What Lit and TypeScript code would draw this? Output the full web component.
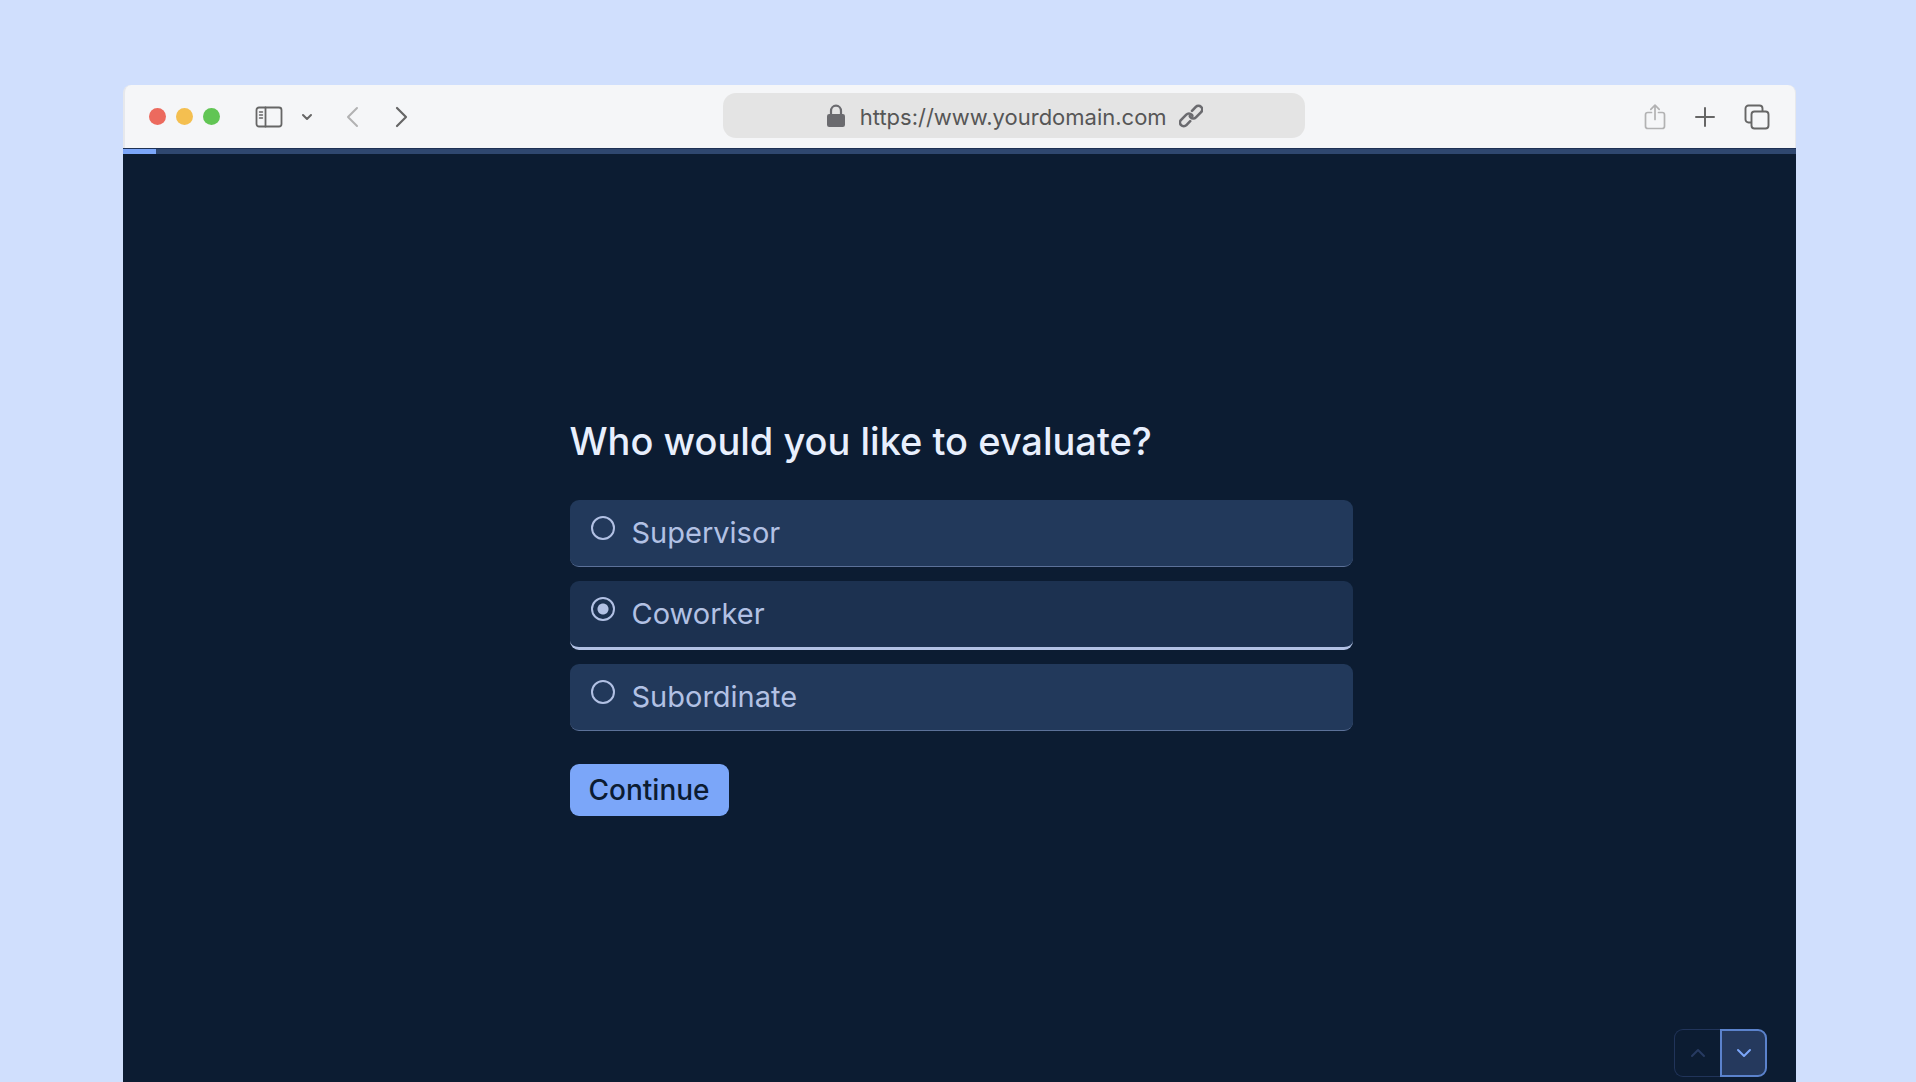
import { LitElement, html, css, svg } from "lit";
import { customElement, state, property } from "lit/decorators.js";

@customElement("browser-bar")
class BrowserBar extends LitElement {
  static styles = css`
    :host {
      display: block;
      font-family: Inter, "Liberation Sans", sans-serif;
    }
    .bar {
      display: grid;
      grid-template-columns: 21fr minmax(0, 582px) 17fr;
      align-items: center;
      height: 63px;
      padding: 0 25px 0 24px;
      box-sizing: border-box;
      background: #f5f6f8;
      border-left: 2px solid #e6e8ec;
      border-right: 1px solid #e6e8ec;
      border-radius: 8px 8px 0 0;
    }
    .left,
    .right,
    .lights {
      display: flex;
      align-items: center;
    }
    .lights {
      gap: 10px;
      margin-right: 35px;
    }
    .light {
      width: 17px;
      height: 17px;
      border-radius: 50%;
    }
    .close {
      background: #ec6a5e;
    }
    .minimise {
      background: #f4bf50;
    }
    .zoom {
      background: #61c554;
    }
    .right {
      justify-content: flex-end;
      gap: 24px;
    }
    button {
      display: block;
      padding: 0;
      border: 0;
      background: none;
      color: #666;
      cursor: pointer;
    }
    .pale {
      color: #b2b2b3;
    }
    .menu {
      margin: 0 29px 0 16px;
    }
    .forward {
      margin-left: 33px;
    }
    svg {
      display: block;
      fill: none;
      stroke: currentColor;
      stroke-linecap: round;
      stroke-linejoin: round;
    }
    .address {
      display: flex;
      align-items: center;
      justify-content: center;
      gap: 12px;
      height: 45px;
      margin-bottom: 2px;
      border-radius: 13px;
      background: #e4e4e4;
      color: #6b6b6f;
    }
    .url {
      color: #565656;
      font-size: 22px;
      line-height: 28px;
      text-decoration: none;
      padding: 3px 0 0 2px;
    }
  `;

  render() {
    return html`
      <header class="bar">
        <div class="left">
          <div class="lights">
            <span class="light close"></span>
            <span class="light minimise"></span>
            <span class="light zoom"></span>
          </div>
          <button aria-label="Sidebar">
            <svg width="28" height="22" viewBox="0 0 28 22" stroke-width="1.8">
              <rect x="1.5" y="1.5" width="25" height="19" rx="2.5" />
              <path d="M10.5 1.5v19" />
              <path d="M4.5 6h3M4.5 9h3M4.5 12h3" stroke-width="1.4" />
            </svg>
          </button>
          <button class="menu" aria-label="Tab groups">
            <svg width="16" height="10" viewBox="0 0 16 10" stroke-width="2">
              <path d="m4 3 4 4 4-4" />
            </svg>
          </button>
          <button class="pale" aria-label="Back">
            <svg width="16" height="22" viewBox="0 0 16 22" stroke-width="2">
              <path d="M13 2 4 11l9 9" />
            </svg>
          </button>
          <button class="forward" aria-label="Forward">
            <svg width="16" height="22" viewBox="0 0 16 22" stroke-width="2.2">
              <path d="m4 2 9 9-9 9" />
            </svg>
          </button>
        </div>
        <div class="address">
          <svg width="20" height="24" viewBox="0 0 20 24">
            <rect x="1" y="10" width="18" height="13" rx="2.2" fill="currentColor" stroke="none" />
            <path d="M5 12V7a5 5.400 0 0 1 10 0V12" stroke-width="2.2" />
          </svg>
          <a class="url" href="https://www.yourdomain.com">https://www.yourdomain.com</a>
          <svg width="24" height="26" viewBox="0 0 24 26" stroke-width="2.600">
            <path d="M13 7.800l3.800-3.900a3.700 3.700 0 0 1 5.300 5.300l-5.200 5.200a3.700 3.700 0 0 1-5.300 0 3.600 3.600 0 0 1-.8-1.300" />
            <path d="M11.200 18.200l-3.800 3.900a3.700 3.700 0 0 1-5.300-5.300l5.200-5.200a3.700 3.700 0 0 1 5.300 0q.6.6.8 1.300" />
          </svg>
        </div>
        <div class="right">
          <button class="pale" aria-label="Share">
            <svg width="22" height="26" viewBox="0 0 22 26" stroke-width="1.700">
              <path d="M7.500 8.500H3.800A2.300 2.300 0 0 0 1.500 10.800v11.400a2.300 2.300 0 0 0 2.300 2.300h14.400a2.300 2.300 0 0 0 2.300-2.300V10.800a2.300 2.300 0 0 0-2.300-2.300h-3.700" />
              <path d="M11 15.500V1.500M6.800 5.300 11 1.200l4.200 4.100" />
            </svg>
          </button>
          <button aria-label="New tab">
            <svg width="30" height="22" viewBox="0 0 30 22" stroke-width="2">
              <path d="M15 2v18M6 11h18" />
            </svg>
          </button>
          <button aria-label="Tab overview">
            <svg width="26" height="26" viewBox="0 0 26 26" stroke-width="1.900">
              <path d="M7 18.500H4.500a3 3 0 0 1-3-3v-11a3 3 0 0 1 3-3h11a3 3 0 0 1 3 3V7" />
              <rect x="7.500" y="7.500" width="17" height="17" rx="3" />
            </svg>
          </button>
        </div>
      </header>
    `;
  }
}

@customElement("survey-progress")
class SurveyProgress extends LitElement {
  @property({ type: Number }) value = 0;

  static styles = css`
    :host {
      display: block;
      background: #2f476f;
      border-top: 1px solid #1e3154;
    }
    .fill {
      height: 5px;
      background: #7ba6f9;
    }
  `;

  render() {
    return html`<div class="fill" role="progressbar" aria-label="Progress"
      aria-valuenow=${this.value} style="width:${this.value}%"></div>`;
  }
}

@customElement("app-root")
class AppRoot extends LitElement {
  @state() private choice = "Coworker";
  private choices = ["Supervisor", "Coworker", "Subordinate"];

  static styles = css`
    :host {
      display: flex;
      flex-direction: column;
      box-sizing: border-box;
      min-height: 100vh;
      padding: 85px 120px 0 123px;
      background: #d0dffd;
      font-family: Inter, "Liberation Sans", sans-serif;
    }
    .page {
      flex: 1;
      display: grid;
      padding: 5px 29px;
      background: #0c1c32;
    }
    form,
    nav {
      grid-area: 1 / 1;
    }
    form {
      place-self: center;
      width: 100%;
      max-width: 783px;
      padding-left: 3px;
    }
    h1 {
      margin: 0 0 38px;
      color: #e8effd;
      font-size: 38px;
      font-weight: 500;
      line-height: 42px;
    }
    fieldset {
      display: flex;
      flex-direction: column;
      gap: 14px;
      margin: 0 0 33px;
      padding: 0;
      border: 0;
      min-width: 0;
    }
    .option {
      display: flex;
      align-items: flex-start;
      gap: 17px;
      box-sizing: border-box;
      min-height: 67px;
      padding: 16px 21px;
      border-radius: 9px;
      border-bottom: 1px solid #5c7199;
      background: #22395b;
      color: #b2c1e4;
      font-size: 29px;
      line-height: 34px;
      cursor: pointer;
    }
    .option.checked {
      background: #1c3150;
      border-bottom: 3px solid #b2c1e4;
    }
    input {
      appearance: none;
      flex: none;
      width: 24px;
      height: 24px;
      margin: 0;
      border: 2px solid #b2c1e4;
      border-radius: 50%;
    }
    input:checked {
      background: radial-gradient(circle, #b2c1e4 5px, transparent 6px);
    }
    .submit {
      display: block;
      height: 52px;
      padding: 0 19px;
      border: 0;
      border-radius: 9px;
      background: #7ba6f9;
      color: #0c1c32;
      font: 500 28px/52px Inter, "Liberation Sans", sans-serif;
      cursor: pointer;
    }
    nav {
      place-self: end;
      display: flex;
    }
    .step {
      display: grid;
      place-items: center;
      box-sizing: border-box;
      width: 46px;
      height: 48px;
      padding: 0;
      border: 1px solid #21345a;
      background: none;
      color: #273a61;
    }
    .up {
      border-right: 0;
      border-radius: 9px 0 0 9px;
    }
    .down {
      width: 47px;
      border: 2px solid #5b82cc;
      border-radius: 0 9px 9px 0;
      background: #25395d;
      color: #7ba6f9;
      cursor: pointer;
    }
    svg {
      fill: none;
      stroke: currentColor;
      stroke-width: 2;
      stroke-linecap: round;
      stroke-linejoin: round;
    }
  `;

  private chevron(d: string) {
    return html`<svg width="16" height="10" viewBox="0 0 16 10">${svg`<path d=${d} />`}</svg>`;
  }

  render() {
    return html`
      <browser-bar></browser-bar>
      <survey-progress .value=${2}></survey-progress>
      <main class="page">
        <form @submit=${(e: Event) => e.preventDefault()}>
          <h1 id="question">Who would you like to evaluate?</h1>
          <fieldset aria-labelledby="question">
            ${this.choices.map(
              (c) => html`
                <label class="option ${c === this.choice ? "checked" : ""}">
                  <input
                    type="radio"
                    name="person"
                    .value=${c}
                    .checked=${c === this.choice}
                    @change=${() => (this.choice = c)}
                  />
                  <span>${c}</span>
                </label>
              `
            )}
          </fieldset>
          <button class="submit">Continue</button>
        </form>
        <nav aria-label="Questions">
          <button class="step up" aria-label="Previous" disabled>${this.chevron("m2 8 6-6 6 6")}</button>
          <button class="step down" aria-label="Next">${this.chevron("m2 2 6 6 6-6")}</button>
        </nav>
      </main>
    `;
  }
}
